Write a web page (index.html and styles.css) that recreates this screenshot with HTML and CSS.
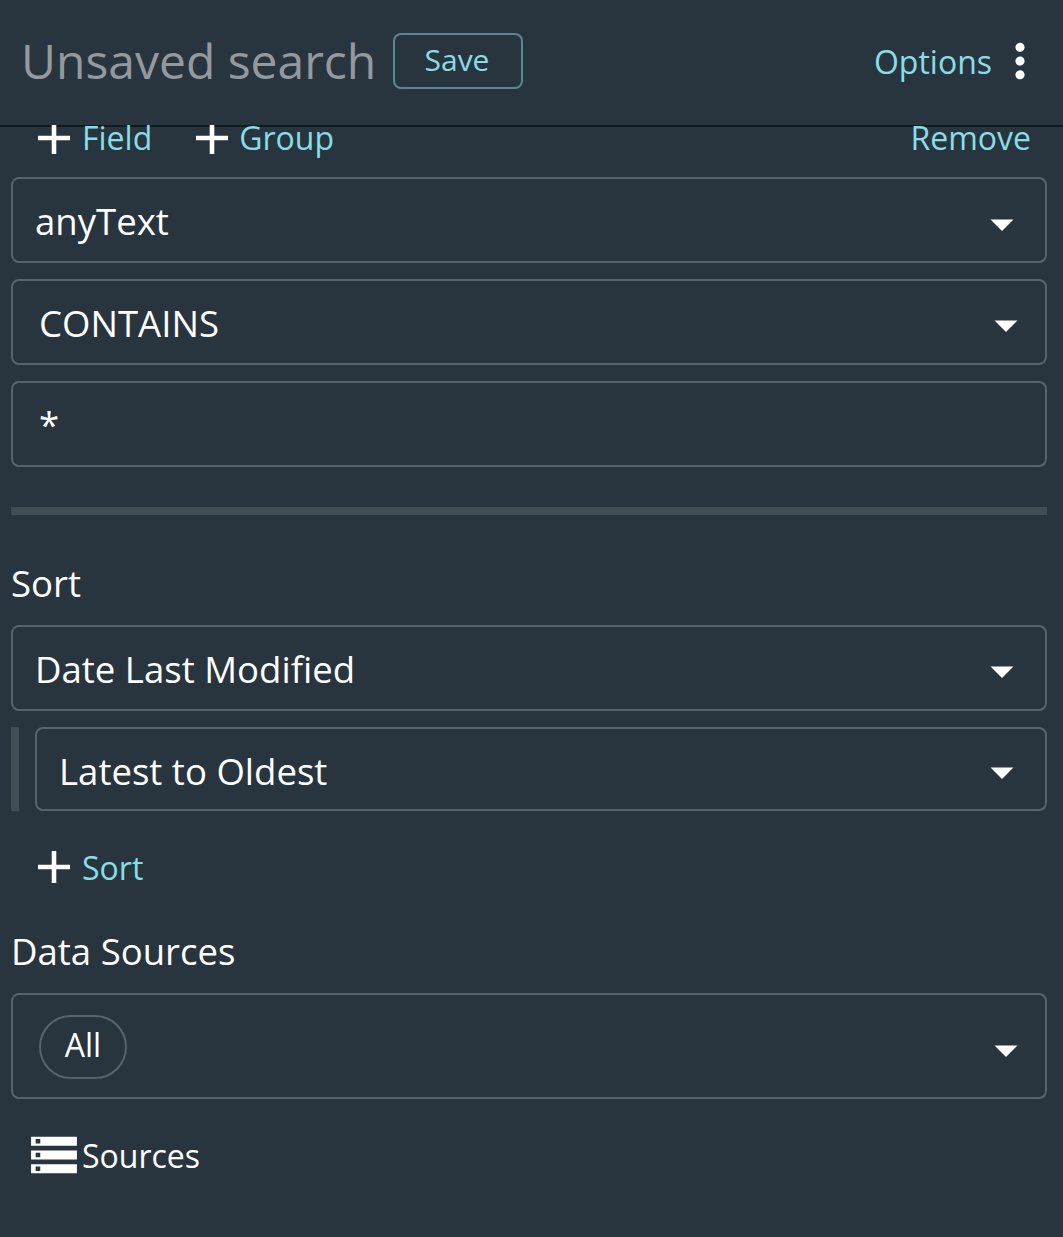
FILE: index.html
```html
<!DOCTYPE html>
<html lang="en">
<head>
<meta charset="utf-8">
<title>Unsaved search</title>
<link rel="stylesheet" href="styles.css">
</head>
<body>
<svg class="defs" width="0" height="0">
  <symbol id="add" viewBox="0 0 24 24"><path d="M19 13h-6v6h-2v-6H5v-2h6V5h2v6h6v2z"/></symbol>
  <symbol id="arrow" viewBox="0 0 24 24"><path d="M7 10l5 5 5-5z"/></symbol>
  <symbol id="more" viewBox="0 0 24 24"><path d="M12 8c1.1 0 2-.9 2-2s-.9-2-2-2-2 .9-2 2 .9 2 2 2zm0 2c-1.1 0-2 .9-2 2s.9 2 2 2 2-.9 2-2-.9-2-2-2zm0 6c-1.1 0-2 .9-2 2s.9 2 2 2 2-.9 2-2-.9-2-2-2z"/></symbol>
  <symbol id="storage" viewBox="0 0 24 24"><path d="M2 20h20v-4H2v4zm2-3h2v2H4v-2zM2 4v4h20V4H2zm4 3H4V5h2v2zm-4 7h20v-4H2v4zm2-3h2v2H4v-2z"/></symbol>
</svg>
<header class="header">
  <h1 class="title">Unsaved search</h1>
  <button class="save">Save</button>
  <button class="options"><span>Options</span><svg class="icon"><use href="#more"/></svg></button>
</header>
<div class="divider"></div>
<main class="content">
  <div class="actions">
    <button class="action"><svg class="icon"><use href="#add"/></svg><span>Field</span></button>
    <button class="action group"><svg class="icon"><use href="#add"/></svg><span>Group</span></button>
    <button class="action remove"><span>Remove</span></button>
  </div>
  <div class="select"><span>anyText</span><svg class="icon arrow"><use href="#arrow"/></svg></div>
  <div class="select inset"><span>CONTAINS</span><svg class="icon arrow-high"><use href="#arrow"/></svg></div>
  <div class="select inset"><span class="value">*</span></div>
  <div class="bar"></div>
  <h2 class="label">Sort</h2>
  <div class="select"><span>Date Last Modified</span><svg class="icon arrow-high"><use href="#arrow"/></svg></div>
  <div class="nested">
    <div class="rail"></div>
    <div class="select direction"><span>Latest to Oldest</span><svg class="icon arrow-high"><use href="#arrow"/></svg></div>
  </div>
  <button class="action add-sort"><svg class="icon"><use href="#add"/></svg><span>Sort</span></button>
  <h2 class="label sources-label">Data Sources</h2>
  <div class="select inset sources"><span class="chip">All</span><svg class="icon arrow"><use href="#arrow"/></svg></div>
  <div class="action sources-title"><svg class="icon"><use href="#storage"/></svg><span>Sources</span></div>
</main>
</body>
</html>
```
FILE: styles.css
```css
* { box-sizing: border-box; }
body {
  margin: 0;
  height: 1237px;
  overflow: hidden;
  background: #29353e;
  color: #fff;
  font: 36.55px/56px "Open Sans", sans-serif;
}
button { padding: 0; border: 0; background: none; font: inherit; color: #88dde6; }
.defs { display: block; height: 0; }
.icon { display: block; flex: none; width: 56px; height: 56px; padding: 0.5px; fill: #fff; }

.header { display: flex; align-items: center; height: 125px; padding: 0 15px 3px 21px; }
.title { margin: 0; width: 372px; font-size: 48px; font-weight: 400; white-space: nowrap; color: #94999e; }
.save {
  width: 130px;
  height: 56px;
  border: 2px solid #588890;
  border-radius: 8px;
  font-size: 30px;
  line-height: 50px;
  padding: 0 2px 2px 0;
}
.options { display: flex; align-items: center; margin-left: auto; font-size: 32px; }
.options span { padding-top: 1px; }
.divider { height: 2px; margin-bottom: -2px; background: #0f1a22; }

.content { height: 1112px; padding: 0 16px 0 11px; overflow: hidden; }
.actions { display: flex; height: 56px; margin-top: -15px; margin-bottom: 11px; padding-left: 15px; gap: 32px; }
.action { display: flex; align-items: center; height: 56px; font-size: 32px; }
.actions span { padding-bottom: 1px; }
.group span { margin-left: -1px; }
.remove { margin-left: auto; margin-right: 16px; }
.select {
  display: flex;
  align-items: center;
  justify-content: space-between;
  height: 86px;
  margin-bottom: 16px;
  padding: 0 15px 0 22px;
  border: 2px solid #57646b;
  border-radius: 8px;
}
.select span { padding-top: 2px; }
.select .value { padding-top: 0; }
.inset { padding: 0 11px 0 26px; }
.arrow { margin-top: 8px; }
.arrow-high { margin-top: 6px; }
.bar { height: 8px; margin-top: 40px; background: #424e56; }
.label { margin: 40px 0 14px; font-size: inherit; font-weight: 400; }
.nested { display: flex; gap: 16px; height: 84px; }
.rail { width: 8px; background: #424e56; }
.direction { flex: 1; height: 84px; }
.direction span { padding-top: 4px; }
.add-sort { margin: 28px 0 0 15px; }
.add-sort span { padding-top: 1px; }
.sources-label { margin: 28px 0 14px; }
.sources { height: 106px; margin-bottom: 28px; }
.select .chip {
  width: 88px;
  height: 64px;
  margin-top: 2px;
  padding-top: 0;
  border: 2px solid #57646b;
  border-radius: 32px;
  text-align: center;
  font-size: 32px;
  line-height: 56px;
}
.sources-title { margin-left: 15px; }
.sources-title span { padding-top: 1px; }
```
